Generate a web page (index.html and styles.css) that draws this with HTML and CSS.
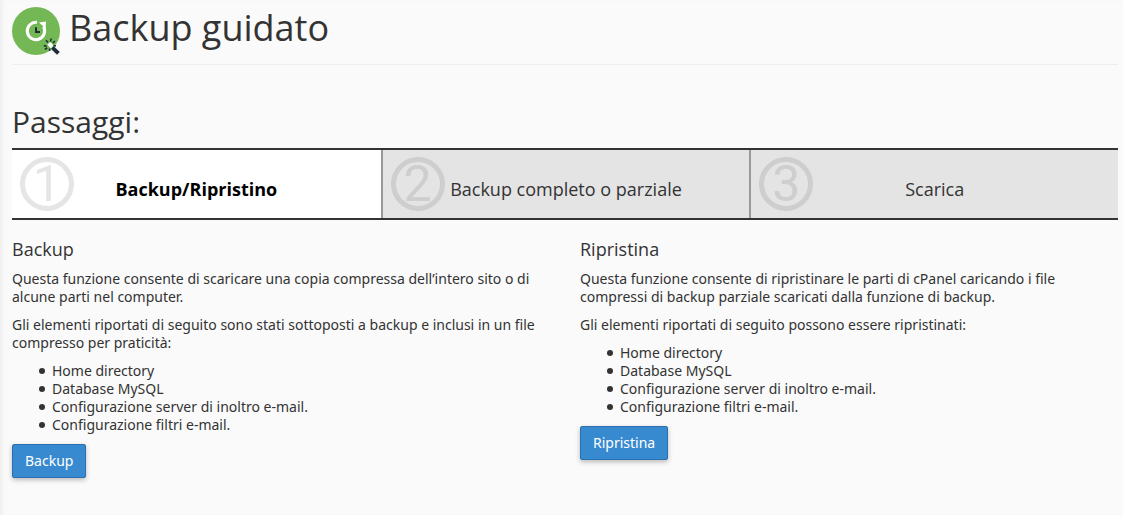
FILE: index.html
```html
<!DOCTYPE html>
<html lang="it">

<head>
    <meta charset="UTF-8">
    <meta name="viewport" content="width=device-width, initial-scale=1.0">
    <title>Backup guidato</title>
    <link rel="stylesheet" href="styles.css">
</head>

<body>
    <main class="content">
        <header class="page-header">
            <svg class="page-icon" viewBox="0 0 48 48" aria-hidden="true">
                <circle cx="24" cy="24" r="24" fill="#74b856" />
                <!-- clock with arrow -->
                <path d="M25 15.3 A8.7 8.7 0 1 0 31.5 19.6" fill="none" stroke="#fff" stroke-width="3" />
                <path d="M27 15.4 L34 14.6 L33.6 21.6 Z" fill="#fff" />
                <path d="M24 20.2 V25 H28" fill="none" stroke="#1f2c3a" stroke-width="2" />
                <!-- magic wand -->
                <path d="M36.8 36.4 L40.2 39.8" stroke="#fff" stroke-width="4" />
                <path d="M40.4 40.6 L46.4 46.4" stroke="#1f2c3a" stroke-width="4" />
                <path d="M38.4 34.4 L39.4 31.6 M40.8 35.8 L43 34.2 M41.5 38.6 L44 39 M36 35.6 L34 33.2 M34.8 39.4 L31.8 38.4 M35.2 41 L32.8 42.4 M37.6 41.4 L37.6 44" stroke="#1f2c3a" stroke-width="1.6" />
            </svg>
            <h1>Backup guidato</h1>
        </header>

        <h2>Passaggi:</h2>
        <ol class="steps">
            <li class="step active"><span class="step-number">1</span>Backup/Ripristino</li>
            <li class="step"><span class="step-number">2</span>Backup completo o parziale</li>
            <li class="step"><span class="step-number">3</span>Scarica</li>
        </ol>

        <div class="row">
            <section class="col">
                <h4>Backup</h4>
                <p>Questa funzione consente di scaricare una copia compressa dell’intero sito o di alcune parti nel computer.</p>
                <p>Gli elementi riportati di seguito sono stati sottoposti a backup e inclusi in un file compresso per praticità:</p>
                <ul>
                    <li>Home directory</li>
                    <li>Database MySQL</li>
                    <li>Configurazione server di inoltro e-mail.</li>
                    <li>Configurazione filtri e-mail.</li>
                </ul>
                <button type="button" class="btn">Backup</button>
            </section>
            <section class="col">
                <h4>Ripristina</h4>
                <p>Questa funzione consente di ripristinare le parti di cPanel caricando i file compressi di backup parziale scaricati dalla funzione di backup.</p>
                <p>Gli elementi riportati di seguito possono essere ripristinati:</p>
                <ul>
                    <li>Home directory</li>
                    <li>Database MySQL</li>
                    <li>Configurazione server di inoltro e-mail.</li>
                    <li>Configurazione filtri e-mail.</li>
                </ul>
                <button type="button" class="btn">Ripristina</button>
            </section>
        </div>
    </main>
</body>

</html>
```
FILE: styles.css
```css
* {
    box-sizing: border-box;
}

body {
    margin: 0;
    min-height: 100vh;
    background-color: #fafafa;
    box-shadow: inset 4px 0 4px -2px #ededed;
    color: #333;
    font-family: "Noto Sans", "Open Sans", sans-serif;
    font-size: 14px;
    line-height: 18px;
}

.content {
    padding: 7px 5px 20px 12px;
}

h1,
h2,
h4 {
    margin: 0;
    font-family: "Open Sans", sans-serif;
    font-weight: 400;
}

.page-header {
    display: flex;
    gap: 9px;
    height: 58px;
    margin-bottom: 40px;
    border-bottom: 1px solid #eee;
}

.page-icon {
    width: 48px;
    height: 48px;
    overflow: visible;
}

h1 {
    font-size: 36px;
    line-height: 42px;
}

h2 {
    margin-bottom: 9px;
    font-size: 30px;
    line-height: 34px;
}

h4 {
    margin-bottom: 12px;
    font-size: 18px;
    line-height: 18px;
}

/* Steps */
.steps {
    display: grid;
    grid-template-columns: repeat(3, 1fr);
    margin: 0 0 20px;
    padding: 0;
    list-style: none;
    border-top: 2px solid #333;
    border-bottom: 2px solid #333;
    background-color: #e4e4e4;
}

.step {
    position: relative;
    padding: 29px 0 19px;
    font-family: "Open Sans", sans-serif;
    font-size: 18px;
    line-height: 20px;
    text-align: center;
}

.step + .step {
    border-left: 2px solid #999;
}

.step.active {
    background-color: #fff;
    color: #000;
    font-weight: 700;
}

/* big number behind the step name */
.step-number {
    position: absolute;
    top: 7px;
    left: 8px;
    width: 54px;
    height: 54px;
    border: 5px solid #cecece;
    border-radius: 50%;
    color: #cecece;
    font-family: Roboto, Arial, sans-serif;
    font-size: 50px;
    font-weight: 400;
    line-height: 44px;
}

.active .step-number {
    border-color: #e5e5e5;
    color: #e5e5e5;
}

/* Columns */
.row {
    display: grid;
    grid-template-columns: 1fr 1fr;
    gap: 30px;
}

p {
    margin: 0 0 10px;
}

ul {
    margin: 0 0 10px;
    padding-left: 27px;
    list-style: none;
}

ul li {
    display: flex;
    align-items: center;
    gap: 7px;
}

ul li::before {
    content: "";
    width: 6px;
    height: 6px;
    border-radius: 50%;
    background-color: #333;
}

.btn {
    padding: 7px 12px;
    border: 1px solid #2a6fae;
    border-radius: 2px;
    background-color: #388ad0;
    box-shadow: 0 2px 5px rgba(0, 0, 0, 0.26);
    color: #fff;
    cursor: pointer;
    font-family: inherit;
    font-size: 14px;
    line-height: 18px;
}
```
